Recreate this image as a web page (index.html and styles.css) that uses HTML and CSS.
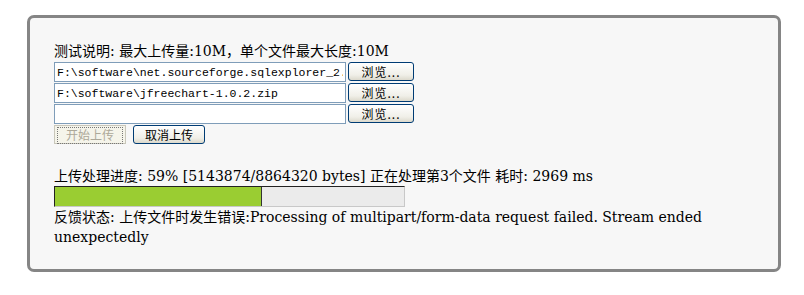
FILE: index.html
```html
<!DOCTYPE html>
<html lang="zh-CN">
<head>
<meta charset="UTF-8" />
<title>文件上传测试</title>
<link rel="stylesheet" href="styles.css">
</head>
<body>

<div class="panel">
  <div class="line">测试说明: 最大上传量:10M，单个文件最大长度:10M</div>

  <div class="file-row">
    <input class="file-path" type="text" value="F:\software\net.sourceforge.sqlexplorer_2.0.0.zip">
    <button class="browse">浏览...</button>
  </div>
  <div class="file-row">
    <input class="file-path" type="text" value="F:\software\jfreechart-1.0.2.zip">
    <button class="browse">浏览...</button>
  </div>
  <div class="file-row">
    <input class="file-path" type="text" value="">
    <button class="browse">浏览...</button>
  </div>

  <div class="actions">
    <button class="btn btn-disabled" disabled><span class="focus">开始上传</span></button>
    <button class="btn">取消上传</button>
  </div>

  <div class="line progress-text">上传处理进度: 59% [5143874/8864320 bytes] 正在处理第3个文件 耗时: 2969 ms</div>
  <div class="progress">
    <div class="progress-fill" style="width: 59%"></div>
  </div>
  <div class="line feedback">反馈状态: 上传文件时发生错误:Processing of multipart/form-data request failed. Stream ended unexpectedly</div>
</div>

</body>
</html>
```

FILE: styles.css
```css
/* página en blanco */
html, body {
  margin: 0;
  background: #fff;
  color: #000;
  font-family: "DejaVu Serif", "Noto Sans CJK SC", serif;
  font-size: 14px;
}

/* caja con borde gris redondeado */
.panel {
  box-sizing: border-box;
  width: 754px;
  height: 257px;
  margin: 15px 0 0 27px;
  padding: 23px 24px 0 24px;
  border: 3px solid #858585;
  border-radius: 7px;
  background: #f7f7f7;
}

.line {
  line-height: 20px;
}

.file-row {
  display: flex;
  align-items: flex-start;
  gap: 2px;
  margin-top: 1px;
}
.file-row:first-of-type {
  margin-top: 2px;
}

.file-path {
  box-sizing: border-box;
  width: 292px;
  height: 20px;
  margin: 0;
  padding: 0 2px;
  border: 1px solid #7f9db9;
  background: #fff;
  font-family: "Liberation Mono", monospace;
  font-size: 11.5px;
  color: #000;
}

.browse, .btn {
  box-sizing: border-box;
  height: 19px;
  margin: 0;
  padding: 0;
  border: 1px solid #003c74;
  border-radius: 3px;
  background: linear-gradient(#fff, #f0efe8 70%, #dcd9cc);
  font-family: "Noto Sans CJK SC", sans-serif;
  font-size: 12px;
  line-height: 16px;
  color: #000;
}

.browse {
  width: 66px;
  letter-spacing: 1px;
}

.actions {
  display: flex;
  gap: 7px;
  margin-top: 1px;
}

.btn {
  width: 72px;
}

.btn-disabled {
  border-color: #c9c7ba;
  border-radius: 0;
  background: #f5f4ea;
  color: #aca899;
  padding: 1px 2px;
}
.btn-disabled .focus {
  display: block;
  height: 15px;
  line-height: 14px;
  border: 1px dotted #777;
}

.progress-text {
  margin-top: 22px;
}

.progress {
  box-sizing: border-box;
  width: 351px;
  height: 21px;
  border: 1px solid #c8c8c8;
  border-top-color: #222;
  border-left-color: #222;
  background: #ebebeb;
}

.progress-fill {
  height: 100%;
  background: #9acd32;
  border-right: 1px solid #333;
}

.feedback {
  width: 670px;
}
```
